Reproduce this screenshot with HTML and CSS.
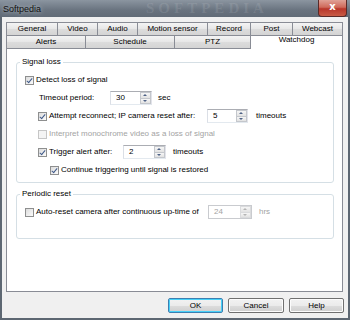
FILE: index.html
```html
<html>
<head>
  <meta charset="UTF-8">
  <title>Softpedia</title>
  <link rel="stylesheet" href="styles.css">
</head>
<body>

<div class="window">

  <div class="titlebar">
    <span class="title">Softpedia</span>
    <span class="mark">SOFTPEDIA</span>
    <span class="close">x</span>
  </div>

  <div class="client">

    <div class="tabs">
      <div class="tabrow">
        <span class="tab w52">General</span>
        <span class="tab w41">Video</span>
        <span class="tab w41">Audio</span>
        <span class="tab w71">Motion sensor</span>
        <span class="tab w44">Record</span>
        <span class="tab w43">Post</span>
        <span class="tab w51">Webcast</span>
      </div>
      <div class="tabrow front">
        <span class="tab w80">Alerts</span>
        <span class="tab w90">Schedule</span>
        <span class="tab w77">PTZ</span>
        <span class="tab w93 selected">Watchdog</span>
      </div>
    </div>

    <div class="page">

      <fieldset class="group first">
        <legend>Signal loss</legend>

        <div class="row">
          <span class="check on"></span>
          <span>Detect loss of signal</span>
        </div>

        <div class="row in14">
          <span class="lbl l71">Timeout period:</span>
          <span class="spin s42"><span class="val">30</span><span class="arrows"><i class="up"></i><i class="down"></i></span></span>
          <span class="unit g6">sec</span>
        </div>

        <div class="row in13">
          <span class="lbl l169"><span class="check on"></span>Attempt reconnect; IP camera reset after:</span>
          <span class="spin s41"><span class="val">5</span><span class="arrows"><i class="up"></i><i class="down"></i></span></span>
          <span class="unit g8">timeouts</span>
        </div>

        <div class="row in13 disabled">
          <span class="check"></span>
          <span>Interpret monochrome video as a loss of signal</span>
        </div>

        <div class="row in13">
          <span class="lbl l85"><span class="check on"></span>Trigger alert after:</span>
          <span class="spin s43"><span class="val">2</span><span class="arrows"><i class="up"></i><i class="down"></i></span></span>
          <span class="unit g7">timeouts</span>
        </div>

        <div class="row in25">
          <span class="check on"></span>
          <span>Continue triggering until signal is restored</span>
        </div>
      </fieldset>

      <fieldset class="group second">
        <legend>Periodic reset</legend>
        <div class="row">
          <span class="lbl l183"><span class="check"></span>Auto-reset camera after continuous up-time of</span>
          <span class="spin s44 off"><span class="val">24</span><span class="arrows"><i class="up"></i><i class="down"></i></span></span>
          <span class="unit g7 dim">hrs</span>
        </div>
      </fieldset>

    </div>

    <div class="buttons">
      <span class="btn default">OK</span>
      <span class="btn wide">Cancel</span>
      <span class="btn">Help</span>
    </div>

  </div>
</div>

</body>
</html>
```

FILE: styles.css
```css
body { margin: 0; padding: 0; background: #5d6772; font: 8px/10px "Liberation Sans", Arial, sans-serif; color: #000; }

.window {
  width: 350px;
  height: 320px;
  background: #5d6772;
  display: flex;
  flex-direction: column;
}

.titlebar {
  height: 17px;
  display: flex;
  align-items: center;
  background: linear-gradient(to bottom, #8b95a0, #69737f 60%, #616b77);
  overflow: hidden;
}
.title { margin-left: 3px; font-size: 9px; color: #111; text-shadow: 0 0 4px #c8d0d8; }
.mark {
  margin-left: 105px;
  font: bold 15px/17px "Liberation Serif", serif;
  letter-spacing: 4px;
  color: rgba(255,255,255,0.10);
}
.close {
  margin-left: auto;
  margin-right: 3px;
  align-self: flex-start;
  width: 27px;
  height: 16px;
  border: 1px solid #5a2a28;
  border-top: none;
  border-radius: 0 0 4px 4px;
  background: linear-gradient(to bottom, #e0a196, #cf6a5b 45%, #b8362a 55%, #c85b45);
  color: #fff;
  font: bold 10px/14px "DejaVu Sans", sans-serif;
  text-align: center;
}

.client {
  margin: 0 2px 2px 2px;
  flex: 1;
  background: #f0f0f0;
  display: flex;
  flex-direction: column;
}

.tabs { margin: 5px 5px 0 4px; }
.tabrow { display: flex; height: 13px; }
.tabrow.front { height: 14px; }

.tab {
  box-sizing: border-box;
  margin-right: -1px;
  border: 1px solid #898c95;
  border-bottom: none;
  background: linear-gradient(to bottom, #f4f4f4, #e6e6e6 50%, #dcdcdc 51%, #d4d4d4);
  text-align: center;
  line-height: 11px;
  color: #000;
}
.front .tab { border-bottom: 1px solid #898c95; line-height: 12px; }
.front .tab.selected {
  background: #fff;
  border-bottom: none;
  line-height: 8px;
}

.w52 { width: 52px; } .w41 { width: 41px; } .w71 { width: 71px; } .w44 { width: 44px; }
.w43 { width: 43px; } .w51 { width: 51px; } .w80 { width: 80px; } .w90 { width: 90px; }
.w77 { width: 77px; } .w93 { width: 93px; }

.page {
  box-sizing: border-box;
  margin-left: 4px;
  width: 337px;
  height: 243px;
  background: #fff;
  border: 1px solid #898c95;
  border-top: none;
  padding: 8px 8px 0 9px;
}

.group {
  margin: 0;
  border: 1px solid #d5dfe5;
  border-radius: 3px;
  padding: 4px 8px 3px 8px;
}
.group legend { margin-left: -5px; padding: 0 2px; line-height: 10px; }
.group.second { margin-top: 6px; padding-bottom: 17px; }

.row { height: 18px; display: flex; align-items: center; white-space: nowrap; }
.in13 { padding-left: 13px; }
.in14 { padding-left: 14px; }
.in25 { padding-left: 25px; }
.disabled { color: #a3a3a3; }

.lbl { display: flex; align-items: center; }
.l71 { width: 71px; } .l85 { width: 85px; } .l169 { width: 169px; } .l183 { width: 183px; }

.check {
  box-sizing: border-box;
  width: 9px;
  height: 9px;
  margin-right: 2px;
  border: 1px solid #8e8f8f;
  background: linear-gradient(135deg, #dcdcdc, #fbfbfb);
  position: relative;
}
.disabled .check { border-color: #c6c6c6; background: #f4f4f4; }
.check.on::after {
  content: "";
  position: absolute;
  left: 2px;
  top: 0px;
  width: 2px;
  height: 5px;
  border: solid #3f5a8a;
  border-width: 0 1.5px 1.5px 0;
  transform: rotate(40deg);
}

.spin {
  box-sizing: border-box;
  height: 14px;
  display: flex;
  border: 1px solid #abadb3;
  border-color: #abadb3 #e2e3ea #e3e9ef #dbdfe6;
  background: #fff;
}
.s41 { width: 41px; } .s42 { width: 42px; } .s43 { width: 43px; } .s44 { width: 44px; }
.val { flex: 1; padding-left: 5px; line-height: 12px; }
.arrows { width: 11px; display: flex; flex-direction: column; }
.arrows i {
  flex: 1;
  border: 1px solid #c4c7cc;
  background: linear-gradient(to bottom, #f6f6f6, #e2e2e2);
  position: relative;
}
.arrows i + i { border-top: none; }
.arrows i::after {
  content: "";
  position: absolute;
  left: 2px;
  top: 1px;
  border-left: 2px solid transparent;
  border-right: 2px solid transparent;
}
.arrows .up::after { border-bottom: 2px solid #4d6185; }
.arrows .down::after { border-top: 2px solid #4d6185; }
.spin.off { border-color: #c9cbcf; }
.spin.off .val { color: #a3a3a3; }
.spin.off .arrows i { border-color: #dadbdd; }
.spin.off .arrows .up::after { border-bottom-color: #b4b4b4; }
.spin.off .arrows .down::after { border-top-color: #b4b4b4; }

.g6 { margin-left: 6px; } .g7 { margin-left: 7px; } .g8 { margin-left: 8px; }
.dim { color: #a3a3a3; }

.buttons {
  display: flex;
  justify-content: flex-end;
  gap: 5px;
  margin: 6px 4px 0 0;
}
.btn {
  box-sizing: border-box;
  width: 55px;
  height: 15px;
  border: 1px solid #707070;
  border-radius: 2px;
  background: linear-gradient(to bottom, #f2f2f2, #ebebeb 50%, #dddddd 51%, #cfcfcf);
  text-align: center;
  line-height: 13px;
  box-shadow: inset 0 0 0 1px #fcfcfc;
}
.btn.wide { width: 56px; }
.btn.default { border-color: #3c7fb1; box-shadow: inset 0 0 0 1px #48d1f8; }
```
